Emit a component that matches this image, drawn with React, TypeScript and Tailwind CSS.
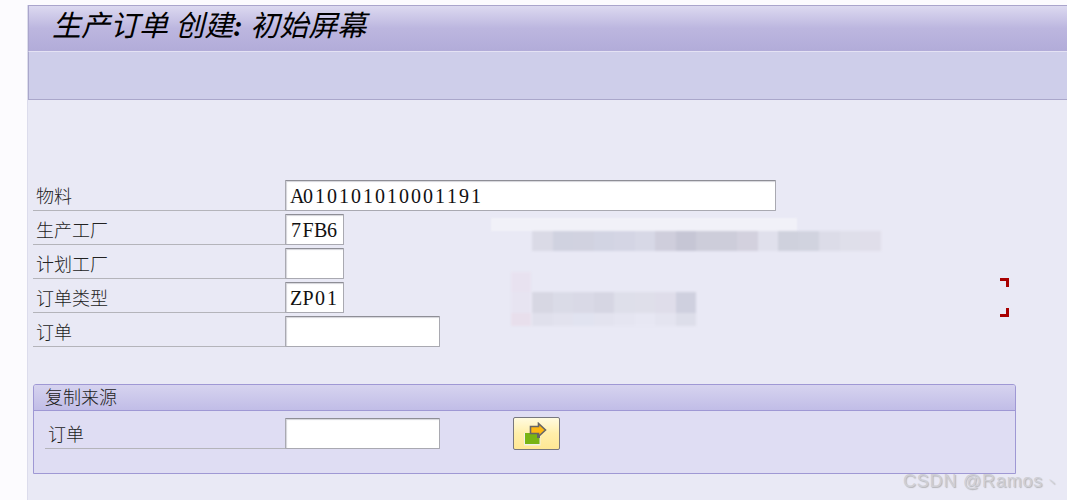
const cjk = "font-['Liberation_Serif','Noto_Sans_CJK_SC',serif]";

const tilesA = ["#dadae6","#d0d2e0","#d1d2e0","#d2d4e3","#d4d5e4","#d7d8e6","#cfcedc","#c6c6d5","#cdcdda","#cdcdda","#d3d1de","#e0e0ec","#cfd1dd","#d1d3df","#dcdce8","#dfdfea","#e0deea"];
const tilesB = ["#d7d7e3","#dadbe7","#d9d9e6","#d6d6e3","#dedfea","#dfdfea","#dfddea","#cfd0df"];
const tilesC = ["#e0e0ec","#e2e2ee","#e1e3f0","#e3e3ef","#e5e5f1","#e7e7f3","#e4e4f0","#dddeea"];

function Tiles({ colors }: { colors: string[] }) {
  return (
    <div className="flex h-full">
      {colors.map((c, i) => (
        <div key={i} className="h-full w-[20.5px]" style={{ backgroundColor: c }} />
      ))}
    </div>
  );
}

function Field({ value, width }: { value?: string; width: string }) {
  return (
    <div
      className={`${width} flex h-[31px] shrink-0 rounded-[1px] border border-[#a9a9b1] border-t-[#8e8e96] bg-white pl-[4px] font-['Liberation_Serif',serif] text-[20px] leading-[30px] text-[#111] shadow-[inset_1px_1px_1px_#d4d4da]`}
    >
      {(value ?? "").split("").map((ch, i) => (
        <span key={i} className="w-[12px] text-center">{ch}</span>
      ))}
    </div>
  );
}

function Row({ label, value, width, inset = false }: { label: string; value?: string; width: string; inset?: boolean }) {
  return (
    <div className="flex h-[34px] items-end">
      <div className={`${inset ? "w-[240px]" : "w-[252px]"} h-[31px] shrink-0 border-b border-[#b4b4ba] pl-[3px] ${cjk} text-[18px] font-light leading-[34px] text-[#222]`}>
        {label}
      </div>
      <Field value={value} width={width} />
    </div>
  );
}

function CopyIcon() {
  return (
    <svg width="24" height="24" viewBox="0 0 24 24" className="block">
      <rect x="0" y="11" width="16.5" height="12.5" fill="#f1f1e6" />
      <rect x="1" y="11" width="14.5" height="11" fill="#78b414" />
      <rect x="13" y="11" width="3" height="5" fill="#666" />
      <polygon points="6.5,4.5 14.5,4.5 14.5,1.5 21.5,8 14.5,14.5 14.5,11.5 6.5,11.5" fill="#fdb813" stroke="#666" strokeWidth="1.6" />
    </svg>
  );
}

export default function App() {
  return (
    <div className="relative flex h-[500px] w-[1067px] overflow-hidden bg-[#fcfbfe]">
      <div className="ml-[27px] flex w-[1040px] flex-col pt-[5px]">
        <div className="w-full flex-1 border-l border-[#dcdcec] bg-[#e9e9f5]">
          <div className={`h-[46px] border-l border-t border-[#aaa5cc] bg-gradient-to-b from-[#dcd9f0] via-[#bcb6df] to-[#b2acd9] pl-[23px] ${cjk} text-[29px] italic leading-[41px] text-black`}>
            生产订单 创建<span className="font-bold">:</span> 初始屏幕
          </div>
          <div className="h-[49px] border-b border-l border-t border-[#aaa7cb] border-t-[#e4e2f4] bg-[#ceceea]" />

          <div className="pl-[5px] pt-[77px]">
            <Row label="物料" value="A010101010001191" width="w-[491px]" />
            <Row label="生产工厂" value="7FB6" width="w-[59px]" />
            <Row label="计划工厂" width="w-[59px]" />
            <Row label="订单类型" value="ZP01" width="w-[59px]" />
            <Row label="订单" width="w-[155px]" />

            <div className="mt-[37px] h-[90px] w-[983px] rounded-t-[3px] border border-[#9f98d4] bg-[#dfddf3]">
              <div className={`h-[26px] rounded-t-[2px] border-b border-[#9f98d4] bg-gradient-to-b from-[#d6d3ef] to-[#c1bde7] pl-[11px] ${cjk} text-[18px] font-light leading-[27px] text-[#222]`}>
                复制来源
              </div>
              <div className="flex items-start pl-[11px] pt-[4px]">
                <Row label="订单" width="w-[155px]" inset />
                <button className="ml-[73px] mt-[2px] flex h-[33px] w-[47px] items-start justify-start rounded-[2px] border border-[#77777f] bg-gradient-to-b from-[#fffbe0] via-[#ffefaa] to-[#ffe794] pl-[10px] pt-[4px]">
                  <CopyIcon />
                </button>
              </div>
            </div>
          </div>
        </div>
      </div>

      {/* blurred-out content lying over the form */}
      <div className="absolute left-[491px] top-[218px] flex flex-col blur-[1px]">
        <div className="h-[13px] w-[306px] bg-[#f1f1f8]" />
        <div className="ml-[41px] h-[20px]"><Tiles colors={tilesA} /></div>
        <div className="ml-[20px] mt-[21px] h-[20px] w-[20px] bg-[#e8e2f0]" />
        <div className="ml-[20px] flex h-[21px] gap-[1px]">
          <div className="h-full w-[20px] bg-[#e7e4f1]" />
          <Tiles colors={tilesB} />
        </div>
        <div className="ml-[20px] flex h-[13px] gap-[1px]">
          <div className="h-full w-[20px] bg-[#e8dfec]" />
          <Tiles colors={tilesC} />
        </div>
      </div>

      <div className="absolute left-[1000px] top-[278px] flex h-[39px] flex-col justify-between">
        <div className="h-[9px] w-[9px] border-r-[3px] border-t-[3px] border-[#a80000]" />
        <div className="h-[9px] w-[9px] border-b-[3px] border-r-[3px] border-[#a80000]" />
      </div>

      <div className="absolute bottom-[6px] left-[903px] font-['Liberation_Sans','Noto_Sans_CJK_SC',sans-serif] text-[18px] leading-[21px] tracking-[0.8px] text-[#cfcfd5] [text-shadow:1px_1px_1px_#b4b4b8]">
        CSDN @Ramos<span className="ml-[3px] text-[12px] text-[#d4d4da]">丶</span>
      </div>
    </div>
  );
}
